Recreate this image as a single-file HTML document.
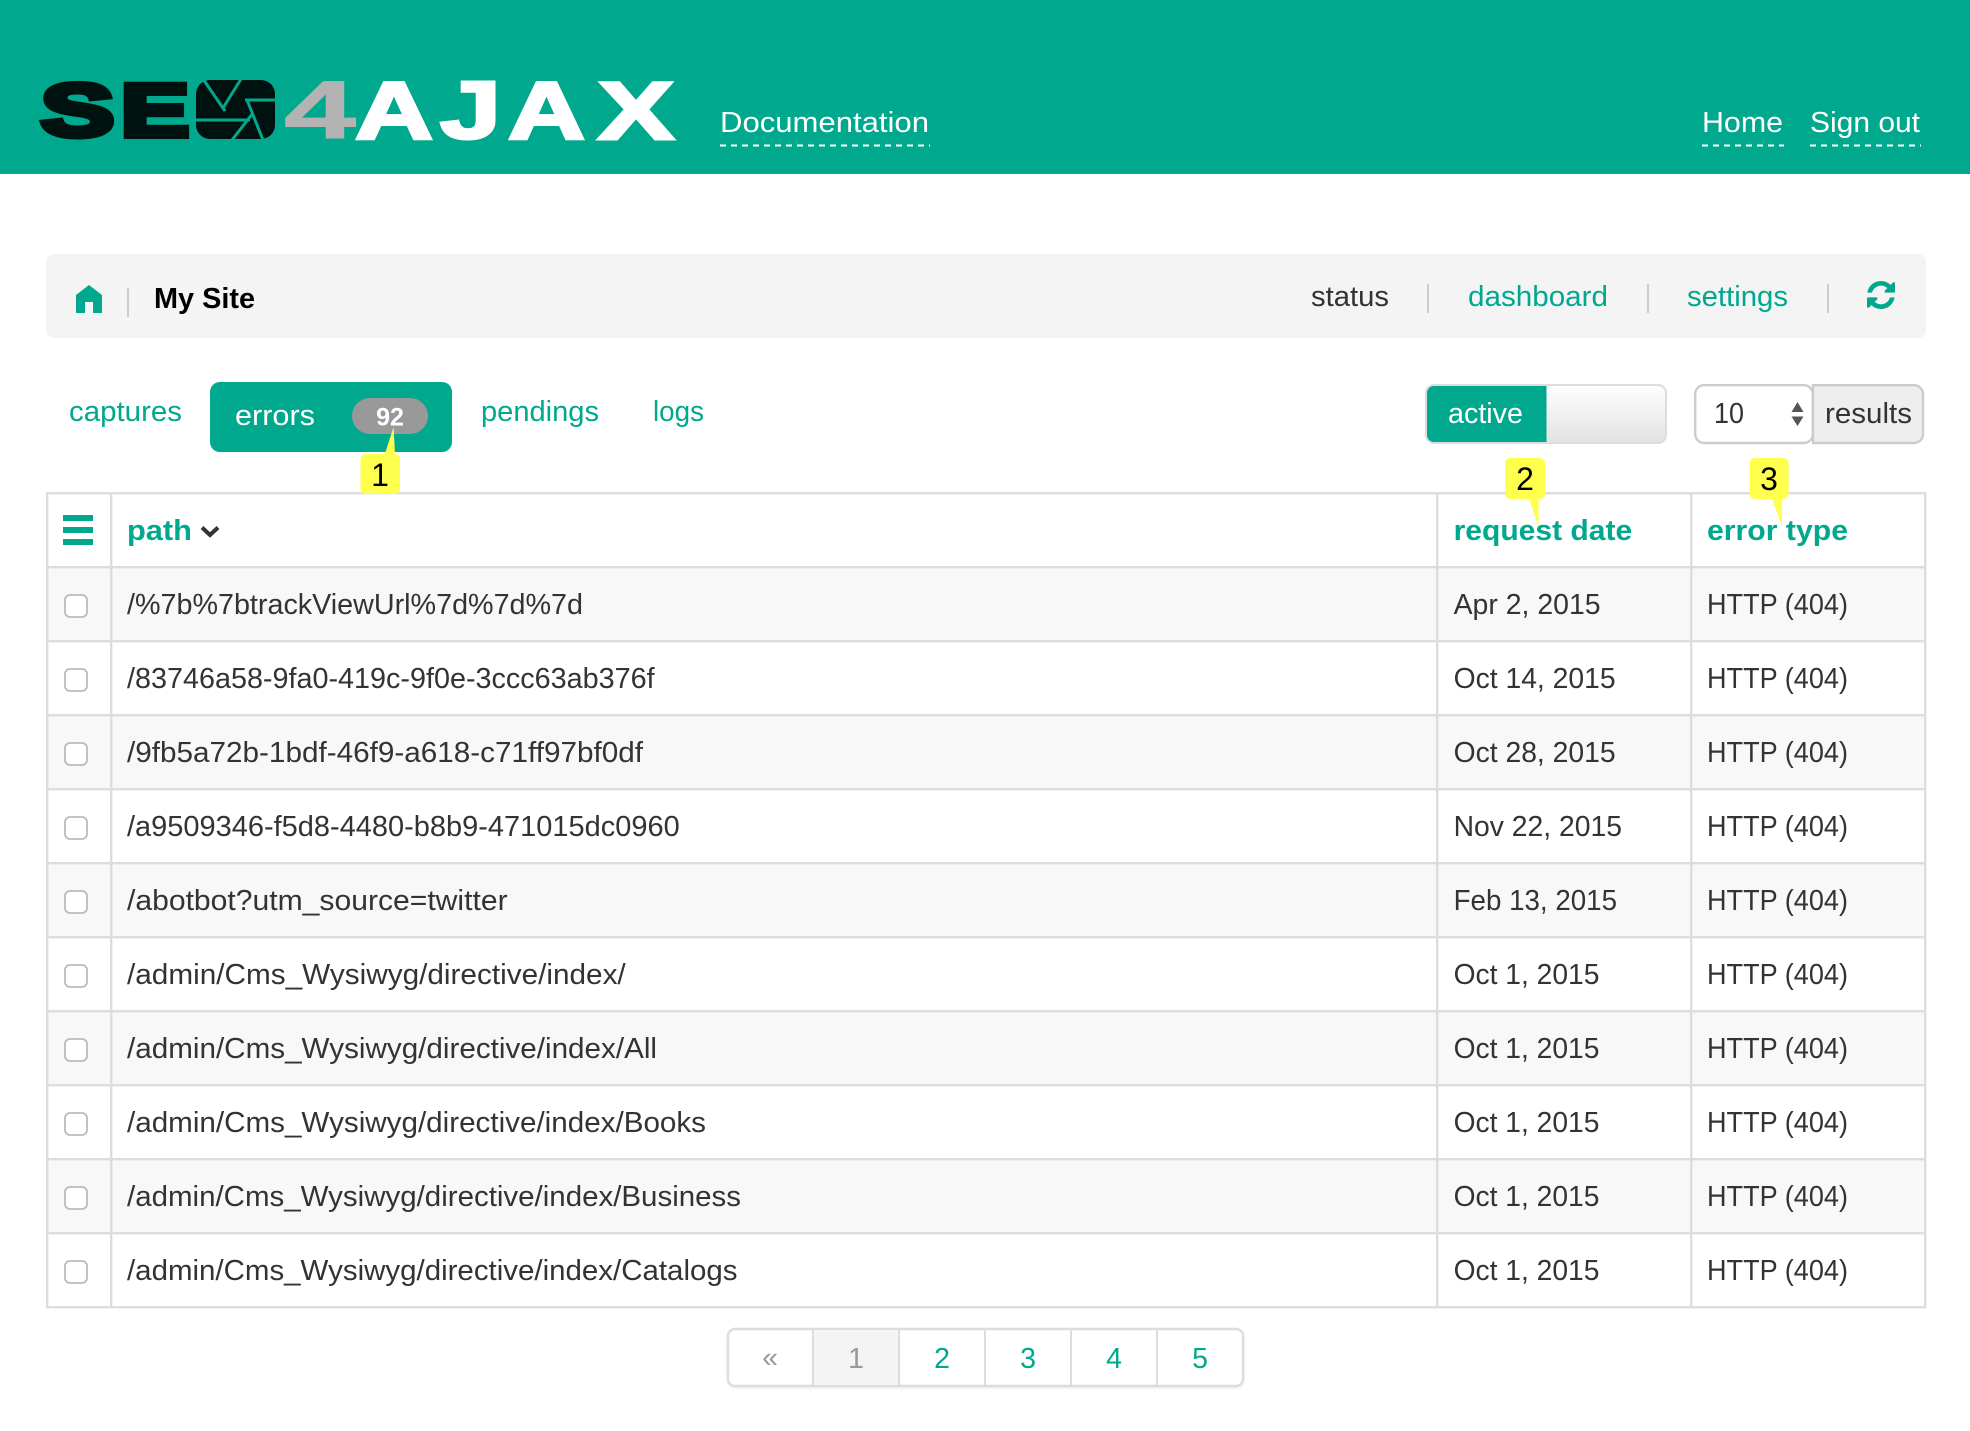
<!DOCTYPE html>
<html lang="en">
<head>
<meta charset="utf-8">
<title>SEO4AJAX - My Site errors</title>
<style>
html,body{margin:0;padding:0;background:#fff;width:1970px;height:1431px;overflow:hidden}
svg{display:block}
text{font-family:"Liberation Sans",sans-serif;font-size:28.5px;fill:#333}
.t{fill:#00a88e}
.w{fill:#fff}
.b{font-weight:bold}
.l{font-weight:bold;font-size:82px;stroke-linejoin:miter}
.num{fill:#000;font-size:32px}
</style>
</head>
<body>
<svg width="1970" height="1431" viewBox="0 0 1970 1431" xmlns="http://www.w3.org/2000/svg">
<rect width="1970" height="174" fill="#00a88e"/>

<!-- logo -->
<g class="logo">
<text class="l" x="41" y="136" textLength="73" lengthAdjust="spacingAndGlyphs" style="font-size:74px;fill:#00120f;stroke:#00120f;stroke-width:6">S</text>
<text class="l" x="121" y="136" textLength="68" lengthAdjust="spacingAndGlyphs" style="font-size:74px;fill:#00120f;stroke:#00120f;stroke-width:6">E</text>
<text class="l" x="198" y="136" textLength="75" lengthAdjust="spacingAndGlyphs" style="font-size:74px;fill:#00120f;stroke:#00120f;stroke-width:2">O</text>
<rect x="196" y="80" width="79" height="59" rx="14" fill="#00120f"/>
<path d="M203 79L225 111M241 79L223 108M245 100H276M195 120H250M232 140L253 113M263 140L247 100" stroke="#00a88e" stroke-width="3" fill="none"/>
<text class="l" x="284" y="138" textLength="72" lengthAdjust="spacingAndGlyphs" style="fill:#b3b3b3;stroke:#b3b3b3;stroke-width:1">4</text>
<text class="l" x="355" y="139" textLength="78" lengthAdjust="spacingAndGlyphs" style="fill:#fff;stroke:#fff;stroke-width:3">A</text>
<text class="l" x="440" y="138" textLength="61" lengthAdjust="spacingAndGlyphs" style="fill:#fff;stroke:#fff;stroke-width:3">J</text>
<text class="l" x="508" y="139" textLength="77" lengthAdjust="spacingAndGlyphs" style="fill:#fff;stroke:#fff;stroke-width:3">A</text>
<text class="l" x="598" y="139" textLength="76" lengthAdjust="spacingAndGlyphs" style="fill:#fff;stroke:#fff;stroke-width:3">X</text>
</g>

<!-- header nav -->
<text class="w" x="720" y="132" textLength="209" lengthAdjust="spacingAndGlyphs">Documentation</text>
<text class="w" x="1702" y="132" textLength="81" lengthAdjust="spacingAndGlyphs">Home</text>
<text class="w" x="1810" y="132" textLength="110" lengthAdjust="spacingAndGlyphs">Sign out</text>
<path d="M720 145.500H930M1702 145.500H1784M1810 145.500H1921" stroke="#fff" stroke-width="2" stroke-dasharray="6 5" fill="none"/>

<!-- breadcrumb panel -->
<rect x="46" y="254" width="1880" height="84" rx="8" fill="#f4f4f4"/>
<path d="M89 285 L102 295 V313 H93 V302 H85 V313 H76 V295 Z" fill="#00a88e"/>
<rect x="127" y="288" width="2" height="29" fill="#ccc"/>
<text class="b" x="154" y="308" style="fill:#000" textLength="101" lengthAdjust="spacingAndGlyphs">My Site</text>
<text x="1311" y="306" textLength="78" lengthAdjust="spacingAndGlyphs">status</text>
<rect x="1427" y="284" width="2" height="29" fill="#ccc"/>
<text class="t" x="1468" y="306" textLength="140" lengthAdjust="spacingAndGlyphs">dashboard</text>
<rect x="1647" y="284" width="2" height="29" fill="#ccc"/>
<text class="t" x="1687" y="306" textLength="101" lengthAdjust="spacingAndGlyphs">settings</text>
<rect x="1827" y="284" width="2" height="29" fill="#ccc"/>
<path transform="translate(1864.67 278.67) scale(0.01823)" fill="#00a88e" d="M1639 1056q0 5-1 7-64 268-268 434.5t-478 166.5q-146 0-282.5-55t-243.5-157l-129 129q-19 19-45 19t-45-19-19-45v-448q0-26 19-45t45-19h448q26 0 45 19t19 45-19 45l-137 137q71 66 161 102t187 36q134 0 250-65t186-179q11-17 53-117 8-23 30-23h192q13 0 22.5 9.5t9.5 22.5zm25-800v448q0 26-19 45t-45 19h-448q-26 0-45-19t-19-45 19-45l138-138q-148-137-349-137-134 0-250 65t-186 179q-11 17-53 117-8 23-30 23h-199q-13 0-22.5-9.5t-9.5-22.5v-7q65-268 270-434.5t480-166.5q146 0 284 55.5t245 156.5l130-129q19-19 45-19t45 19 19 45z"/>

<!-- tabs -->
<text class="t" x="69" y="421" textLength="113" lengthAdjust="spacingAndGlyphs">captures</text>
<rect x="210" y="382" width="242" height="70" rx="10" fill="#00a88e"/>
<text class="w" x="235" y="425" textLength="80" lengthAdjust="spacingAndGlyphs">errors</text>
<rect x="352" y="398" width="76" height="36" rx="18" fill="#999"/>
<text class="w b" x="390" y="425.500" text-anchor="middle" style="font-size:25px">92</text>
<text class="t" x="481" y="421" textLength="118" lengthAdjust="spacingAndGlyphs">pendings</text>
<text class="t" x="653" y="421" textLength="51" lengthAdjust="spacingAndGlyphs">logs</text>

<!-- active switch -->
<defs>
<linearGradient id="g" x1="0" y1="0" x2="0" y2="1"><stop offset="0" stop-color="#fff"/><stop offset="1" stop-color="#e2e2e2"/></linearGradient>
</defs>
<rect x="1426" y="385" width="240" height="58" rx="8" fill="url(#g)" stroke="#ddd" stroke-width="2"/>
<path d="M1546.500 386H1434a7 7 0 0 0-7 7v42a7 7 0 0 0 7 7h112.500z" fill="#00a88e"/>
<text class="w" x="1448" y="423" textLength="75" lengthAdjust="spacingAndGlyphs">active</text>

<!-- results select -->
<path d="M1813 385.200H1914a9 9 0 0 1 9 9V434a9 9 0 0 1-9 9H1813z" fill="#eee" stroke="#ccc" stroke-width="2.400"/>
<rect x="1695.200" y="385.200" width="117.600" height="57.800" rx="9" fill="#fff" stroke="#ccc" stroke-width="2.400"/>
<text x="1714" y="423" textLength="30" lengthAdjust="spacingAndGlyphs">10</text>
<path d="M1797.500 402l6 10h-12zM1797.500 426l6-9.500h-12z" fill="#555"/>
<text x="1825" y="423" textLength="87" lengthAdjust="spacingAndGlyphs">results</text>

<!-- table -->
<rect x="47" y="567" width="1878" height="74" fill="#f8f8f8"/>
<rect x="47" y="715" width="1878" height="74" fill="#f8f8f8"/>
<rect x="47" y="863" width="1878" height="74" fill="#f8f8f8"/>
<rect x="47" y="1011" width="1878" height="74" fill="#f8f8f8"/>
<rect x="47" y="1159" width="1878" height="74" fill="#f8f8f8"/>
<g fill="#ddd">
<rect x="46" y="492" width="1880" height="2.400"/>
<rect x="46" y="566" width="1880" height="2.400"/>
<rect x="46" y="640" width="1880" height="2.400"/>
<rect x="46" y="714" width="1880" height="2.400"/>
<rect x="46" y="788" width="1880" height="2.400"/>
<rect x="46" y="862" width="1880" height="2.400"/>
<rect x="46" y="936" width="1880" height="2.400"/>
<rect x="46" y="1010" width="1880" height="2.400"/>
<rect x="46" y="1084" width="1880" height="2.400"/>
<rect x="46" y="1158" width="1880" height="2.400"/>
<rect x="46" y="1232" width="1880" height="2.400"/>
<rect x="46" y="1306" width="1880" height="2.400"/>
<rect x="46" y="492" width="2.400" height="815"/>
<rect x="110" y="492" width="2.400" height="815"/>
<rect x="1436" y="492" width="2.400" height="815"/>
<rect x="1690" y="492" width="2.400" height="815"/>
<rect x="1924" y="492" width="2.400" height="815"/>
</g>

<g fill="#00a88e"><rect x="63" y="515" width="30" height="6"/><rect x="63" y="527" width="30" height="6"/><rect x="63" y="539" width="30" height="6"/></g>
<text class="t b" x="127" y="540" textLength="65" lengthAdjust="spacingAndGlyphs">path</text>
<path d="M202 527.500l8 7.500 8-7.500" fill="none" stroke="#333" stroke-width="4"/>
<text class="t b" x="1453.600" y="540" textLength="178.600" lengthAdjust="spacingAndGlyphs">request date</text>
<text class="t b" x="1707" y="540" textLength="141" lengthAdjust="spacingAndGlyphs">error type</text>

<g fill="#fff" stroke="#bbb" stroke-width="1.800">
<rect x="65" y="595" width="22" height="22" rx="5"/>
<rect x="65" y="669" width="22" height="22" rx="5"/>
<rect x="65" y="743" width="22" height="22" rx="5"/>
<rect x="65" y="817" width="22" height="22" rx="5"/>
<rect x="65" y="891" width="22" height="22" rx="5"/>
<rect x="65" y="965" width="22" height="22" rx="5"/>
<rect x="65" y="1039" width="22" height="22" rx="5"/>
<rect x="65" y="1113" width="22" height="22" rx="5"/>
<rect x="65" y="1187" width="22" height="22" rx="5"/>
<rect x="65" y="1261" width="22" height="22" rx="5"/>
</g>

<text x="127" y="614" textLength="456" lengthAdjust="spacingAndGlyphs">/%7b%7btrackViewUrl%7d%7d%7d</text>
<text x="1453.600" y="614" textLength="147" lengthAdjust="spacingAndGlyphs">Apr 2, 2015</text>
<text x="1707" y="614" textLength="141" lengthAdjust="spacingAndGlyphs">HTTP (404)</text>

<text x="127" y="688" textLength="527.600" lengthAdjust="spacingAndGlyphs">/83746a58-9fa0-419c-9f0e-3ccc63ab376f</text>
<text x="1453.600" y="688" textLength="162" lengthAdjust="spacingAndGlyphs">Oct 14, 2015</text>
<text x="1707" y="688" textLength="141" lengthAdjust="spacingAndGlyphs">HTTP (404)</text>

<text x="127" y="762" textLength="516" lengthAdjust="spacingAndGlyphs">/9fb5a72b-1bdf-46f9-a618-c71ff97bf0df</text>
<text x="1453.600" y="762" textLength="162" lengthAdjust="spacingAndGlyphs">Oct 28, 2015</text>
<text x="1707" y="762" textLength="141" lengthAdjust="spacingAndGlyphs">HTTP (404)</text>

<text x="127" y="836" textLength="552.700" lengthAdjust="spacingAndGlyphs">/a9509346-f5d8-4480-b8b9-471015dc0960</text>
<text x="1453.600" y="836" textLength="168.400" lengthAdjust="spacingAndGlyphs">Nov 22, 2015</text>
<text x="1707" y="836" textLength="141" lengthAdjust="spacingAndGlyphs">HTTP (404)</text>

<text x="127" y="910" textLength="380.600" lengthAdjust="spacingAndGlyphs">/abotbot?utm_source=twitter</text>
<text x="1453.600" y="910" textLength="163.400" lengthAdjust="spacingAndGlyphs">Feb 13, 2015</text>
<text x="1707" y="910" textLength="141" lengthAdjust="spacingAndGlyphs">HTTP (404)</text>

<text x="127" y="984" textLength="498.700" lengthAdjust="spacingAndGlyphs">/admin/Cms_Wysiwyg/directive/index/</text>
<text x="1453.600" y="984" textLength="145.800" lengthAdjust="spacingAndGlyphs">Oct 1, 2015</text>
<text x="1707" y="984" textLength="141" lengthAdjust="spacingAndGlyphs">HTTP (404)</text>

<text x="127" y="1058" textLength="530" lengthAdjust="spacingAndGlyphs">/admin/Cms_Wysiwyg/directive/index/All</text>
<text x="1453.600" y="1058" textLength="145.800" lengthAdjust="spacingAndGlyphs">Oct 1, 2015</text>
<text x="1707" y="1058" textLength="141" lengthAdjust="spacingAndGlyphs">HTTP (404)</text>

<text x="127" y="1132" textLength="579" lengthAdjust="spacingAndGlyphs">/admin/Cms_Wysiwyg/directive/index/Books</text>
<text x="1453.600" y="1132" textLength="145.800" lengthAdjust="spacingAndGlyphs">Oct 1, 2015</text>
<text x="1707" y="1132" textLength="141" lengthAdjust="spacingAndGlyphs">HTTP (404)</text>

<text x="127" y="1206" textLength="614" lengthAdjust="spacingAndGlyphs">/admin/Cms_Wysiwyg/directive/index/Business</text>
<text x="1453.600" y="1206" textLength="145.800" lengthAdjust="spacingAndGlyphs">Oct 1, 2015</text>
<text x="1707" y="1206" textLength="141" lengthAdjust="spacingAndGlyphs">HTTP (404)</text>

<text x="127" y="1280" textLength="610.500" lengthAdjust="spacingAndGlyphs">/admin/Cms_Wysiwyg/directive/index/Catalogs</text>
<text x="1453.600" y="1280" textLength="145.800" lengthAdjust="spacingAndGlyphs">Oct 1, 2015</text>
<text x="1707" y="1280" textLength="141" lengthAdjust="spacingAndGlyphs">HTTP (404)</text>

<!-- pagination -->
<rect x="728" y="1329" width="515" height="57" rx="7" fill="#fff" stroke="#ddd" stroke-width="2.400" style="filter:drop-shadow(0 1px 1px rgba(0,0,0,.08))"/>
<rect x="813" y="1330" width="86" height="55" fill="#f4f4f4"/>
<g fill="#ddd"><rect x="812" y="1329" width="2" height="57"/><rect x="898" y="1329" width="2" height="57"/><rect x="984" y="1329" width="2" height="57"/><rect x="1070" y="1329" width="2" height="57"/><rect x="1156" y="1329" width="2" height="57"/></g>
<text x="770" y="1367" text-anchor="middle" style="fill:#999">«</text>
<text x="856" y="1368" text-anchor="middle" style="fill:#999">1</text>
<text class="t" x="942" y="1368" text-anchor="middle">2</text>
<text class="t" x="1028" y="1368" text-anchor="middle">3</text>
<text class="t" x="1114" y="1368" text-anchor="middle">4</text>
<text class="t" x="1200" y="1368" text-anchor="middle">5</text>

<!-- callouts -->
<g fill="#ffff4d">
<path d="M384.500 455L393.600 427 395 455z"/>
<rect x="360.500" y="454" width="39.500" height="40" rx="5"/>
<path d="M1529 498L1538.500 527 1538.500 498z"/>
<rect x="1505" y="458" width="40" height="41" rx="5"/>
<path d="M1772 498L1782 527 1782 498z"/>
<rect x="1749.600" y="458" width="39" height="41" rx="5"/>
</g>
<text class="num" x="380" y="486" text-anchor="middle">1</text>
<text class="num" x="1525" y="490" text-anchor="middle">2</text>
<text class="num" x="1769" y="490" text-anchor="middle">3</text>
</svg>
</body>
</html>
